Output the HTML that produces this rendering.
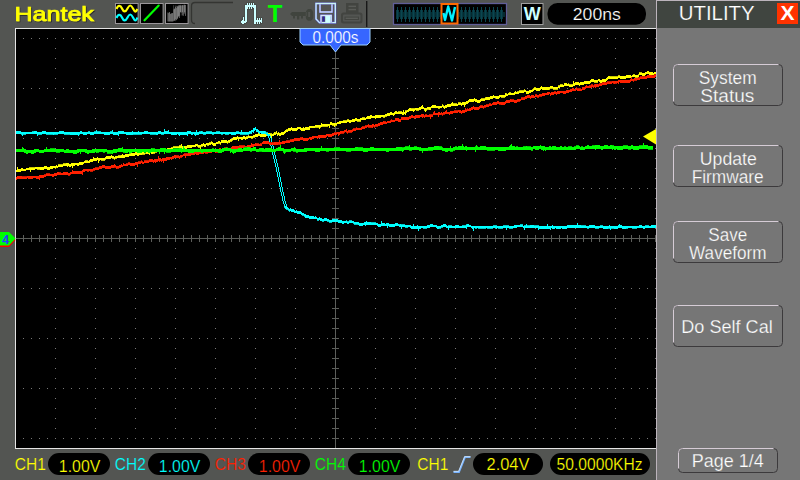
<!DOCTYPE html>
<html lang="en"><head><meta charset="utf-8"><title>Hantek UTILITY</title>
<style>html,body{margin:0;padding:0;background:#535552;width:800px;height:480px;overflow:hidden}svg{display:block;position:absolute;left:0;top:0}text{font-family:"Liberation Sans", sans-serif}</style>
</head><body>
<svg width="800" height="480" viewBox="0 0 800 480">
<defs>
<pattern id="hd" x="23" y="0" width="8" height="1" patternUnits="userSpaceOnUse"><rect width="1" height="1" fill="#787878"/></pattern>
<pattern id="vd" x="0" y="38" width="1" height="10" patternUnits="userSpaceOnUse"><rect width="1" height="1" fill="#787878"/></pattern>
<pattern id="ht" x="23" y="0" width="8" height="7" patternUnits="userSpaceOnUse"><rect width="1" height="7" fill="#5c5e5a"/></pattern>
<pattern id="vt" x="0" y="38" width="7" height="10" patternUnits="userSpaceOnUse"><rect width="7" height="1" fill="#5c5e5a"/></pattern>
<filter id="bl" x="-20%" y="-20%" width="140%" height="140%"><feGaussianBlur stdDeviation="0.45"/></filter>
<filter id="ds" x="-5%" y="-20%" width="110%" height="150%"><feDropShadow dx="1" dy="1" stdDeviation="0" flood-color="#2e2e2e" flood-opacity="1"/></filter>
</defs>
<rect width="800" height="480" fill="#535552"/>
<g shape-rendering="crispEdges">
<rect x="15" y="28" width="641" height="421" fill="#e4e4e4"/>
<rect x="16" y="29" width="640" height="419" fill="#000"/>
<rect x="23" y="38" width="633" height="1" fill="url(#hd)"/>
<rect x="23" y="88" width="633" height="1" fill="url(#hd)"/>
<rect x="23" y="138" width="633" height="1" fill="url(#hd)"/>
<rect x="23" y="188" width="633" height="1" fill="url(#hd)"/>
<rect x="23" y="288" width="633" height="1" fill="url(#hd)"/>
<rect x="23" y="338" width="633" height="1" fill="url(#hd)"/>
<rect x="23" y="388" width="633" height="1" fill="url(#hd)"/>
<rect x="23" y="438" width="633" height="1" fill="url(#hd)"/>
<rect x="55" y="38" width="1" height="401" fill="url(#vd)"/>
<rect x="95" y="38" width="1" height="401" fill="url(#vd)"/>
<rect x="135" y="38" width="1" height="401" fill="url(#vd)"/>
<rect x="175" y="38" width="1" height="401" fill="url(#vd)"/>
<rect x="215" y="38" width="1" height="401" fill="url(#vd)"/>
<rect x="255" y="38" width="1" height="401" fill="url(#vd)"/>
<rect x="295" y="38" width="1" height="401" fill="url(#vd)"/>
<rect x="375" y="38" width="1" height="401" fill="url(#vd)"/>
<rect x="415" y="38" width="1" height="401" fill="url(#vd)"/>
<rect x="455" y="38" width="1" height="401" fill="url(#vd)"/>
<rect x="495" y="38" width="1" height="401" fill="url(#vd)"/>
<rect x="535" y="38" width="1" height="401" fill="url(#vd)"/>
<rect x="575" y="38" width="1" height="401" fill="url(#vd)"/>
<rect x="615" y="38" width="1" height="401" fill="url(#vd)"/>
<rect x="655" y="38" width="1" height="401" fill="url(#vd)"/>
<rect x="16" y="238" width="640" height="1" fill="#5c5e5a"/>
<rect x="23" y="235" width="633" height="7" fill="url(#ht)"/>
<rect x="335" y="29" width="1" height="419" fill="#5c5e5a"/>
<rect x="332" y="38" width="7" height="401" fill="url(#vt)"/>
</g>
<g shape-rendering="crispEdges">
<path fill="#c6c600" d="M29 167h6v1h-6zM37 169h3v1h-3zM55 168h1v1h-1zM56 167h1v1h-1zM58 164h5v1h-5zM63 163h3v1h-3zM85 160h3v1h-3zM101 160h4v1h-4zM105 159h1v1h-1zM112 158h2v1h-2zM114 159h1v1h-1zM115 158h2v1h-2zM118 155h3v1h-3zM129 153h2v1h-2zM142 154h3v1h-3zM145 153h1v1h-1zM153 153h2v1h-2zM155 152h2v1h-2zM157 149h3v1h-3zM160 148h1v1h-1zM171 147h2v1h-2zM173 146h6v1h-6zM179 145h2v1h-2zM197 146h1v1h-1zM198 147h3v1h-3zM201 146h2v1h-2zM207 145h2v1h-2zM209 142h2v1h-2zM211 141h1v1h-1zM218 143h2v1h-2zM220 144h1v1h-1zM227 143h1v1h-1zM228 142h2v1h-2zM230 141h2v1h-2zM232 140h1v1h-1zM246 136h2v1h-2zM248 135h1v1h-1zM251 138h2v1h-2zM253 137h2v1h-2zM270 133h2v1h-2zM273 133h1v1h-1zM274 132h2v1h-2zM286 129h2v1h-2zM315 127h6v1h-6zM322 126h6v1h-6zM332 125h5v1h-5zM343 120h4v1h-4zM347 119h2v1h-2zM357 121h4v1h-4zM362 117h3v1h-3zM383 117h2v1h-2zM385 116h2v1h-2zM398 111h4v1h-4zM405 110h2v1h-2zM411 108h4v1h-4zM416 110h3v1h-3zM424 110h3v1h-3zM427 109h2v1h-2zM438 108h2v1h-2zM442 104h1v1h-1zM443 105h1v1h-1zM453 103h4v1h-4zM458 102h3v1h-3zM481 98h4v1h-4zM485 97h1v1h-1zM501 97h4v1h-4zM505 94h1v1h-1zM506 93h1v1h-1zM509 92h2v1h-2zM517 91h2v1h-2zM519 90h5v1h-5zM524 89h1v1h-1zM532 89h1v1h-1zM533 88h1v1h-1zM534 87h2v1h-2zM548 89h2v1h-2zM550 88h3v1h-3zM553 89h5v1h-5zM558 85h2v1h-2zM560 84h3v1h-3zM568 83h1v1h-1zM569 84h4v1h-4zM594 82h4v1h-4zM610 76h8v1h-8zM618 75h2v1h-2zM633 74h2v1h-2zM635 77h3v1h-3zM638 74h1v1h-1zM639 72h3v1h-3z"/><path fill="#ffff00" d="M16 170h1v2h-1zM17 169h4v3h-4zM21 168h2v3h-2zM23 169h3v2h-3zM26 168h9v2h-9zM35 167h5v2h-5zM40 167h4v3h-4zM44 166h3v3h-3zM47 167h3v3h-3zM50 166h3v3h-3zM53 166h3v2h-3zM56 165h1v2h-1zM57 166h1v2h-1zM58 165h5v2h-5zM63 164h3v2h-3zM66 163h3v3h-3zM69 164h2v3h-2zM71 163h3v3h-3zM74 163h3v2h-3zM77 163h2v3h-2zM79 162h4v3h-4zM83 162h1v2h-1zM84 161h5v2h-5zM89 160h1v3h-1zM90 159h3v3h-3zM93 159h1v2h-1zM94 158h3v3h-3zM97 157h1v3h-1zM98 158h2v3h-2zM100 158h5v2h-5zM105 157h1v2h-1zM106 156h5v3h-5zM111 155h1v3h-1zM112 156h2v2h-2zM114 157h1v2h-1zM115 156h6v2h-6zM121 155h4v3h-4zM125 154h4v3h-4zM129 154h2v2h-2zM131 153h4v3h-4zM135 152h2v3h-2zM137 153h2v3h-2zM139 152h3v3h-3zM142 152h3v2h-3zM145 151h1v2h-1zM146 151h3v3h-3zM149 150h2v3h-2zM151 151h2v3h-2zM153 151h2v2h-2zM155 150h5v2h-5zM160 149h2v2h-2zM162 149h2v3h-2zM164 150h2v2h-2zM166 149h1v3h-1zM167 148h4v3h-4zM171 148h2v2h-2zM173 147h6v2h-6zM179 146h2v2h-2zM181 146h6v3h-6zM187 145h5v3h-5zM192 145h3v2h-3zM195 144h3v2h-3zM198 145h3v2h-3zM201 144h3v2h-3zM204 144h2v3h-2zM206 143h5v2h-5zM211 142h1v2h-1zM212 142h1v3h-1zM213 143h3v3h-3zM216 142h2v2h-2zM218 141h2v2h-2zM220 142h1v2h-1zM221 140h6v3h-6zM227 141h1v2h-1zM228 140h2v2h-2zM230 139h2v2h-2zM232 138h1v2h-1zM233 137h4v3h-4zM237 136h1v3h-1zM238 137h3v2h-3zM241 137h2v3h-2zM243 136h2v3h-2zM245 137h1v3h-1zM246 137h2v2h-2zM248 136h5v2h-5zM253 135h2v2h-2zM255 134h3v3h-3zM258 133h1v3h-1zM259 134h1v2h-1zM260 134h6v3h-6zM266 133h4v3h-4zM270 134h4v2h-4zM274 133h2v2h-2zM276 131h1v3h-1zM277 133h1v3h-1zM278 132h1v3h-1zM279 133h2v3h-2zM281 132h3v3h-3zM284 131h1v3h-1zM285 131h1v2h-1zM286 130h2v2h-2zM288 128h3v3h-3zM291 127h1v3h-1zM292 128h5v3h-5zM297 127h1v3h-1zM298 127h2v2h-2zM300 127h1v3h-1zM301 128h4v3h-4zM305 127h5v3h-5zM310 126h5v2h-5zM315 125h7v2h-7zM322 124h8v2h-8zM330 122h2v3h-2zM332 123h5v2h-5zM337 122h2v2h-2zM339 121h2v3h-2zM341 121h6v2h-6zM347 120h2v2h-2zM349 120h2v3h-2zM351 120h1v2h-1zM352 119h3v3h-3zM355 118h2v3h-2zM357 119h4v2h-4zM361 118h5v2h-5zM366 117h1v2h-1zM367 116h4v3h-4zM371 115h1v3h-1zM372 116h3v2h-3zM375 115h6v3h-6zM381 115h4v2h-4zM385 114h2v2h-2zM387 113h3v3h-3zM390 112h2v3h-2zM392 113h2v2h-2zM394 112h1v3h-1zM395 111h2v3h-2zM397 112h5v2h-5zM402 112h2v3h-2zM404 112h1v2h-1zM405 111h2v2h-2zM407 110h1v2h-1zM408 109h1v3h-1zM409 108h2v3h-2zM411 109h4v2h-4zM415 108h4v2h-4zM419 107h2v3h-2zM421 106h2v3h-2zM423 107h1v2h-1zM424 108h3v2h-3zM427 107h2v2h-2zM429 107h2v3h-2zM431 106h1v2h-1zM432 105h4v3h-4zM436 106h6v2h-6zM442 105h1v2h-1zM443 106h1v2h-1zM444 106h1v3h-1zM445 105h2v3h-2zM447 104h4v3h-4zM451 103h2v3h-2zM453 104h5v2h-5zM458 103h3v2h-3zM461 103h1v3h-1zM462 102h4v3h-4zM466 101h2v3h-2zM468 100h1v3h-1zM469 99h5v3h-5zM474 98h1v3h-1zM475 99h2v3h-2zM477 100h3v3h-3zM480 99h1v3h-1zM481 99h4v2h-4zM485 98h1v2h-1zM486 97h4v3h-4zM490 96h3v3h-3zM493 95h1v3h-1zM494 96h2v2h-2zM496 96h3v3h-3zM499 95h1v3h-1zM500 95h6v2h-6zM506 94h2v2h-2zM508 93h6v2h-6zM514 92h1v3h-1zM515 91h1v3h-1zM516 92h3v2h-3zM519 91h5v2h-5zM524 90h2v2h-2zM526 91h3v3h-3zM529 90h2v3h-2zM531 90h2v2h-2zM533 89h1v2h-1zM534 88h2v2h-2zM536 88h4v3h-4zM540 87h1v3h-1zM541 86h1v3h-1zM542 87h6v3h-6zM548 87h2v2h-2zM550 86h3v2h-3zM553 87h5v2h-5zM558 86h2v2h-2zM560 85h4v2h-4zM564 83h3v3h-3zM567 84h2v2h-2zM569 85h4v2h-4zM573 83h2v3h-2zM575 82h4v3h-4zM579 83h1v3h-1zM580 82h4v3h-4zM584 81h6v3h-6zM590 80h1v3h-1zM591 79h3v3h-3zM594 80h4v2h-4zM598 79h1v2h-1zM599 79h1v3h-1zM600 80h2v3h-2zM602 79h4v3h-4zM606 78h1v3h-1zM607 77h1v3h-1zM608 76h2v3h-2zM610 77h8v2h-8zM618 76h2v2h-2zM620 76h6v3h-6zM626 75h5v3h-5zM631 76h1v2h-1zM632 75h7v2h-7zM639 73h3v2h-3zM642 73h3v3h-3zM645 72h1v3h-1zM646 72h1v2h-1zM647 71h2v3h-2zM649 72h4v3h-4zM653 73h1v3h-1zM654 72h2v3h-2z"/><path fill="#ffff00" d="M17 167h1v2h-1zM30 170h1v2h-1zM67 166h1v1h-1zM72 166h1v2h-1zM74 165h1v1h-1zM93 157h1v2h-1zM98 161h1v2h-1zM122 154h1v1h-1zM129 153h1v1h-1zM149 153h1v2h-1zM161 151h1v1h-1zM167 151h1v1h-1zM181 144h1v2h-1zM195 146h1v1h-1zM200 147h1v2h-1zM203 143h1v1h-1zM229 142h1v1h-1zM238 139h1v2h-1zM271 136h1v2h-1zM274 132h1v1h-1zM285 130h1v1h-1zM303 127h1v1h-1zM309 126h1v1h-1zM319 127h1v2h-1zM321 123h1v2h-1zM329 126h1v2h-1zM334 125h1v2h-1zM360 118h1v1h-1zM370 115h1v1h-1zM375 118h1v1h-1zM393 115h1v1h-1zM403 110h1v2h-1zM405 113h1v2h-1zM413 111h1v1h-1zM422 105h1v1h-1zM425 110h1v2h-1zM452 102h1v1h-1zM464 105h1v2h-1zM505 93h1v2h-1zM548 89h1v1h-1zM573 81h1v2h-1z"/>
<path fill="#00c6c6" d="M21 134h5v1h-5zM32 131h2v1h-2zM37 134h5v1h-5zM46 134h12v1h-12zM64 134h6v1h-6zM78 134h2v1h-2zM88 131h2v1h-2zM94 131h2v1h-2zM97 131h4v1h-4zM110 131h2v1h-2zM133 134h9v1h-9zM150 134h6v1h-6zM161 134h3v1h-3zM199 131h4v1h-4zM203 134h3v1h-3zM206 131h6v1h-6zM212 134h2v1h-2zM216 131h4v1h-4zM221 134h2v1h-2zM225 134h4v1h-4zM236 131h3v1h-3zM240 134h9v1h-9zM249 133h2v1h-2zM251 132h1v1h-1zM265 131h1v1h-1zM266 132h2v1h-2z"/><path fill="#00ffff" d="M16 131h5v3h-5zM21 132h13v2h-13zM34 131h3v3h-3zM37 132h5v2h-5zM42 131h4v3h-4zM46 132h13v2h-13zM59 131h5v3h-5zM64 132h6v2h-6zM70 132h8v3h-8zM78 132h2v2h-2zM80 131h2v3h-2zM82 132h1v2h-1zM83 132h3v3h-3zM86 132h4v2h-4zM90 132h4v3h-4zM94 132h10v2h-10zM104 132h6v3h-6zM110 132h3v2h-3zM113 132h5v3h-5zM118 131h6v3h-6zM124 132h3v2h-3zM127 132h6v3h-6zM133 132h11v2h-11zM144 131h4v3h-4zM148 132h8v2h-8zM156 132h2v3h-2zM158 131h3v3h-3zM161 132h3v2h-3zM164 131h5v3h-5zM169 132h2v2h-2zM171 132h6v3h-6zM177 132h1v2h-1zM178 132h9v3h-9zM187 131h4v3h-4zM191 132h2v3h-2zM193 132h1v2h-1zM194 132h5v3h-5zM199 132h32v2h-32zM231 132h5v3h-5zM236 132h13v2h-13zM249 131h2v2h-2zM251 130h2v2h-2zM253 128h2v3h-2zM255 127h1v3h-1zM256 129h2v3h-2zM258 130h1v3h-1zM259 131h1v3h-1zM260 131h1v2h-1zM261 131h4v3h-4zM265 132h1v2h-1zM266 133h2v2h-2zM268 134h1v2h-1z"/><path fill="#00ffff" d="M22 134h1v2h-1zM37 134h1v2h-1zM53 134h1v1h-1zM78 134h1v2h-1zM86 134h1v1h-1zM96 130h1v2h-1zM112 130h1v2h-1zM118 134h1v2h-1zM126 134h1v1h-1zM132 131h1v1h-1zM138 131h1v1h-1zM164 129h1v2h-1zM168 130h1v1h-1zM179 135h1v1h-1zM187 134h1v2h-1zM195 135h1v1h-1zM196 130h1v2h-1zM201 131h1v1h-1zM241 130h1v2h-1zM249 133h1v1h-1zM251 132h1v2h-1zM253 131h1v2h-1z"/>
<path fill="#00c6c6" d="M284 207h1v1h-1zM285 208h1v1h-1zM286 209h2v1h-2zM288 210h1v1h-1zM289 211h1v1h-1zM302 215h2v1h-2zM304 216h2v1h-2zM317 220h2v1h-2zM322 221h2v1h-2zM327 221h2v1h-2zM329 222h3v1h-3zM346 220h1v1h-1zM347 221h2v1h-2zM349 220h3v1h-3zM353 223h1v1h-1zM354 224h4v1h-4zM371 222h5v1h-5zM399 224h6v1h-6zM405 227h3v1h-3zM423 228h4v1h-4zM439 228h2v1h-2zM441 227h2v1h-2zM448 225h4v1h-4zM462 225h4v1h-4zM466 224h1v1h-1zM475 228h2v1h-2zM478 228h8v1h-8zM487 228h6v1h-6zM493 225h4v1h-4zM498 228h5v1h-5zM503 225h6v1h-6zM509 228h4v1h-4zM520 224h3v1h-3zM524 225h6v1h-6zM534 225h5v1h-5zM581 225h5v1h-5zM587 228h2v1h-2zM595 228h4v1h-4zM600 225h3v1h-3zM608 228h6v1h-6zM626 228h2v1h-2zM632 228h5v1h-5zM645 225h4v1h-4z"/><path fill="#00ffff" d="M284 205h1v2h-1zM285 206h1v2h-1zM286 207h2v2h-2zM288 208h1v2h-1zM289 209h1v2h-1zM290 208h1v3h-1zM291 209h3v3h-3zM294 210h1v3h-1zM295 211h1v2h-1zM296 210h1v3h-1zM297 211h4v3h-4zM301 212h1v3h-1zM302 213h2v2h-2zM304 214h2v2h-2zM306 215h3v3h-3zM309 216h5v3h-5zM314 217h3v2h-3zM317 218h2v2h-2zM319 217h1v3h-1zM320 218h2v3h-2zM322 219h2v2h-2zM324 218h3v3h-3zM327 219h2v2h-2zM329 220h3v2h-3zM332 219h6v3h-6zM338 220h4v3h-4zM342 221h2v3h-2zM344 221h3v2h-3zM347 222h2v2h-2zM349 221h5v2h-5zM354 222h4v2h-4zM358 222h1v3h-1zM359 223h4v3h-4zM363 223h1v2h-1zM364 222h7v3h-7zM371 223h6v2h-6zM377 223h1v3h-1zM378 224h3v3h-3zM381 223h4v3h-4zM385 224h1v2h-1zM386 223h3v3h-3zM389 224h6v3h-6zM395 223h3v3h-3zM398 224h1v2h-1zM399 225h11v2h-11zM410 225h1v3h-1zM411 226h10v3h-10zM421 226h6v2h-6zM427 225h3v3h-3zM430 224h3v3h-3zM433 225h3v2h-3zM436 225h1v3h-1zM437 226h2v3h-2zM439 226h2v2h-2zM441 225h2v2h-2zM443 224h3v3h-3zM446 225h1v3h-1zM447 226h8v2h-8zM455 225h4v3h-4zM459 226h7v2h-7zM466 225h1v2h-1zM467 224h2v3h-2zM469 225h2v2h-2zM471 226h1v2h-1zM472 226h2v3h-2zM474 226h41v2h-41zM515 225h2v3h-2zM517 225h6v2h-6zM523 226h7v2h-7zM530 225h4v3h-4zM534 226h5v2h-5zM539 226h11v3h-11zM550 226h2v2h-2zM552 226h3v3h-3zM555 226h1v2h-1zM556 226h5v3h-5zM561 226h1v2h-1zM562 226h5v3h-5zM567 225h14v3h-14zM581 226h8v2h-8zM589 225h6v3h-6zM595 226h8v2h-8zM603 226h5v3h-5zM608 226h6v2h-6zM614 226h4v3h-4zM618 225h4v3h-4zM622 226h4v3h-4zM626 226h13v2h-13zM639 225h3v3h-3zM642 226h1v2h-1zM643 226h2v3h-2zM645 226h6v2h-6zM651 225h4v3h-4zM655 226h1v2h-1z"/><path fill="#00ffff" d="M285 208h1v1h-1zM305 216h1v2h-1zM315 216h1v1h-1zM365 225h1v1h-1zM366 221h1v1h-1zM381 221h1v2h-1zM387 226h1v2h-1zM400 224h1v1h-1zM401 227h1v2h-1zM413 224h1v2h-1zM417 225h1v1h-1zM418 229h1v2h-1zM448 228h1v2h-1zM466 227h1v2h-1zM473 229h1v2h-1zM496 228h1v1h-1zM506 228h1v2h-1zM514 225h1v1h-1zM524 228h1v2h-1zM526 224h1v2h-1zM538 228h1v2h-1zM547 224h1v2h-1zM550 228h1v2h-1zM552 225h1v1h-1zM577 223h1v2h-1zM609 225h1v1h-1zM610 228h1v2h-1zM619 224h1v1h-1zM655 225h1v1h-1z"/>
</g>
<path shape-rendering="crispEdges" fill="#00ffff" d="M267 134h1v1h-1zM269 134h1v1h-1zM267 135h1v1h-1zM269 135h1v1h-1zM268 136h1v1h-1zM270 136h1v1h-1zM268 137h1v1h-1zM270 137h1v1h-1zM269 138h1v1h-1zM271 138h1v1h-1zM269 139h1v1h-1zM271 139h1v1h-1zM269 140h1v1h-1zM271 140h1v1h-1zM269 141h1v1h-1zM271 141h1v1h-1zM270 142h1v1h-1zM272 142h1v1h-1zM270 143h1v1h-1zM272 143h1v1h-1zM270 144h1v1h-1zM272 144h1v1h-1zM270 145h1v1h-1zM272 145h1v1h-1zM271 146h1v1h-1zM273 146h1v1h-1zM271 147h1v1h-1zM273 147h1v1h-1zM271 148h1v1h-1zM273 148h1v1h-1zM271 149h1v1h-1zM273 149h1v1h-1zM272 150h1v1h-1zM274 150h1v1h-1zM272 151h1v1h-1zM274 151h1v1h-1zM272 152h1v1h-1zM274 152h1v1h-1zM272 153h1v1h-1zM274 153h1v1h-1zM272 154h1v1h-1zM274 154h1v1h-1zM273 155h1v1h-1zM275 155h1v1h-1zM273 156h1v1h-1zM275 156h1v1h-1zM273 157h1v1h-1zM275 157h1v1h-1zM273 158h1v1h-1zM275 158h1v1h-1zM274 159h1v1h-1zM276 159h1v1h-1zM274 160h1v1h-1zM276 160h1v1h-1zM274 161h1v1h-1zM276 161h1v1h-1zM274 162h1v1h-1zM276 162h1v1h-1zM275 163h1v1h-1zM277 163h1v1h-1zM275 164h1v1h-1zM277 164h1v1h-1zM275 165h1v1h-1zM277 165h1v1h-1zM275 166h1v1h-1zM277 166h1v1h-1zM276 167h1v1h-1zM278 167h1v1h-1zM276 168h1v1h-1zM278 168h1v1h-1zM276 169h1v1h-1zM278 169h1v1h-1zM276 170h1v1h-1zM278 170h1v1h-1zM276 171h1v1h-1zM278 171h1v1h-1zM277 172h1v1h-1zM279 172h1v1h-1zM277 173h1v1h-1zM279 173h1v1h-1zM277 174h1v1h-1zM279 174h1v1h-1zM277 175h1v1h-1zM279 175h1v1h-1zM277 176h1v1h-1zM279 176h1v1h-1zM278 177h1v1h-1zM280 177h1v1h-1zM278 178h1v1h-1zM280 178h1v1h-1zM278 179h1v1h-1zM280 179h1v1h-1zM278 180h1v1h-1zM280 180h1v1h-1zM278 181h1v1h-1zM280 181h1v1h-1zM279 182h1v1h-1zM281 182h1v1h-1zM279 183h1v1h-1zM281 183h1v1h-1zM279 184h1v1h-1zM281 184h1v1h-1zM279 185h1v1h-1zM281 185h1v1h-1zM279 186h1v1h-1zM281 186h1v1h-1zM280 187h1v1h-1zM282 187h1v1h-1zM280 188h1v1h-1zM282 188h1v1h-1zM280 189h1v1h-1zM282 189h1v1h-1zM280 190h1v1h-1zM282 190h1v1h-1zM280 191h1v1h-1zM282 191h1v1h-1zM281 192h1v1h-1zM283 192h1v1h-1zM281 193h1v1h-1zM283 193h1v1h-1zM281 194h1v1h-1zM283 194h1v1h-1zM281 195h1v1h-1zM283 195h1v1h-1zM282 196h1v1h-1zM284 196h1v1h-1zM282 197h1v1h-1zM284 197h1v1h-1zM282 198h1v1h-1zM284 198h1v1h-1zM282 199h1v1h-1zM284 199h1v1h-1zM282 200h1v1h-1zM284 200h1v1h-1zM283 201h1v1h-1zM285 201h1v1h-1zM283 202h1v1h-1zM285 202h1v1h-1zM283 203h1v1h-1zM285 203h1v1h-1zM284 204h1v1h-1zM286 204h1v1h-1zM284 205h1v1h-1zM286 205h1v1h-1zM284 206h1v1h-1zM286 206h1v1h-1z"/>
<g shape-rendering="crispEdges">
<path fill="#c61800" d="M22 176h5v1h-5zM44 174h2v1h-2zM46 173h4v1h-4zM59 172h2v1h-2zM68 175h2v1h-2zM70 174h1v1h-1zM87 171h2v1h-2zM90 171h3v1h-3zM93 170h2v1h-2zM95 167h4v1h-4zM114 167h2v1h-2zM116 168h3v1h-3zM126 163h2v1h-2zM128 162h2v1h-2zM138 161h3v1h-3zM141 160h1v1h-1zM142 161h1v1h-1zM144 160h5v1h-5zM176 155h3v1h-3zM179 158h1v1h-1zM180 157h2v1h-2zM184 153h4v1h-4zM200 151h4v1h-4zM204 150h1v1h-1zM205 153h3v1h-3zM215 152h3v1h-3zM218 151h1v1h-1zM224 147h2v1h-2zM226 148h1v1h-1zM227 147h1v1h-1zM239 145h6v1h-6zM255 143h4v1h-4zM260 143h2v1h-2zM269 142h5v1h-5zM278 144h3v1h-3zM286 140h4v1h-4zM290 139h2v1h-2zM300 137h2v1h-2zM334 132h3v1h-3zM341 133h3v1h-3zM344 132h1v1h-1zM346 132h1v1h-1zM347 133h1v1h-1zM348 132h4v1h-4zM352 129h1v1h-1zM353 128h3v1h-3zM356 127h1v1h-1zM362 126h3v1h-3zM365 125h2v1h-2zM368 127h4v1h-4zM372 126h2v1h-2zM374 127h1v1h-1zM375 126h3v1h-3zM384 121h2v1h-2zM390 120h1v1h-1zM391 119h1v1h-1zM424 115h1v1h-1zM425 114h2v1h-2zM429 114h4v1h-4zM433 112h1v1h-1zM441 114h1v1h-1zM442 115h1v1h-1zM443 114h2v1h-2zM454 110h4v1h-4zM466 109h1v1h-1zM467 108h1v1h-1zM480 105h3v1h-3zM483 108h1v1h-1zM484 107h2v1h-2zM486 104h3v1h-3zM489 103h2v1h-2zM499 104h2v1h-2zM511 99h3v1h-3zM518 101h2v1h-2zM521 97h3v1h-3zM535 94h2v1h-2zM537 97h2v1h-2zM539 96h3v1h-3zM554 91h2v1h-2zM576 87h1v1h-1zM577 88h4v1h-4zM589 85h2v1h-2zM591 84h2v1h-2zM593 85h1v1h-1zM594 84h1v1h-1zM598 84h1v1h-1zM599 83h3v1h-3zM602 82h5v1h-5zM607 81h5v1h-5zM613 83h4v1h-4zM633 81h1v1h-1zM634 80h3v1h-3zM638 77h2v1h-2zM640 76h6v1h-6zM652 75h2v1h-2zM654 74h2v1h-2z"/><path fill="#ff2000" d="M16 177h1v3h-1zM17 176h5v3h-5zM22 177h5v2h-5zM27 176h1v2h-1zM28 176h5v3h-5zM33 176h3v2h-3zM36 176h3v3h-3zM39 175h5v3h-5zM44 175h2v2h-2zM46 174h6v2h-6zM52 174h2v3h-2zM54 173h3v3h-3zM57 172h2v3h-2zM59 173h4v2h-4zM63 172h5v3h-5zM68 173h2v2h-2zM70 172h3v2h-3zM73 171h9v3h-9zM82 170h1v3h-1zM83 169h2v3h-2zM85 169h8v2h-8zM93 168h6v2h-6zM99 166h3v3h-3zM102 165h3v3h-3zM105 166h6v3h-6zM111 165h3v3h-3zM114 165h2v2h-2zM116 166h3v2h-3zM119 165h2v3h-2zM121 164h1v3h-1zM122 165h1v2h-1zM123 164h5v2h-5zM128 163h2v2h-2zM130 163h5v3h-5zM135 162h3v3h-3zM138 162h3v2h-3zM141 161h1v2h-1zM142 162h2v2h-2zM144 161h5v2h-5zM149 159h3v3h-3zM152 160h1v2h-1zM153 160h1v3h-1zM154 159h4v3h-4zM158 158h3v3h-3zM161 159h1v3h-1zM162 158h5v3h-5zM167 157h3v3h-3zM170 157h1v2h-1zM171 157h1v3h-1zM172 156h2v3h-2zM174 155h2v3h-2zM176 156h4v2h-4zM180 155h3v2h-3zM183 154h5v2h-5zM188 153h3v3h-3zM191 152h4v3h-4zM195 151h1v3h-1zM196 152h3v3h-3zM199 151h1v3h-1zM200 152h4v2h-4zM204 151h4v2h-4zM208 150h4v3h-4zM212 150h6v2h-6zM218 149h1v2h-1zM219 148h2v3h-2zM221 149h3v2h-3zM224 148h2v2h-2zM226 149h1v2h-1zM227 148h2v2h-2zM229 148h2v3h-2zM231 147h1v3h-1zM232 146h7v3h-7zM239 146h6v2h-6zM245 146h2v3h-2zM247 145h4v3h-4zM251 144h3v3h-3zM254 144h8v2h-8zM262 142h1v2h-1zM263 141h6v3h-6zM269 143h5v2h-5zM274 142h4v3h-4zM278 142h4v2h-4zM282 141h3v3h-3zM285 141h5v2h-5zM290 140h2v2h-2zM292 139h2v3h-2zM294 138h6v3h-6zM300 138h2v2h-2zM302 137h1v3h-1zM303 138h5v3h-5zM308 138h1v2h-1zM309 137h1v2h-1zM310 137h2v3h-2zM312 136h2v3h-2zM314 136h3v2h-3zM317 136h1v3h-1zM318 135h8v3h-8zM326 134h1v3h-1zM327 134h1v2h-1zM328 134h4v3h-4zM332 133h2v3h-2zM334 133h3v2h-3zM337 132h2v2h-2zM339 132h1v3h-1zM340 131h1v3h-1zM341 131h3v2h-3zM344 130h3v2h-3zM347 131h1v2h-1zM348 130h5v2h-5zM353 129h3v2h-3zM356 128h5v2h-5zM361 127h4v2h-4zM365 126h2v2h-2zM367 125h5v2h-5zM372 124h2v2h-2zM374 125h1v2h-1zM375 124h3v2h-3zM378 123h2v3h-2zM380 122h3v3h-3zM383 121h1v3h-1zM384 122h3v2h-3zM387 121h4v2h-4zM391 120h4v2h-4zM395 118h4v3h-4zM399 119h2v3h-2zM401 117h8v3h-8zM409 116h2v3h-2zM411 115h2v3h-2zM413 116h1v2h-1zM414 116h1v3h-1zM415 115h5v3h-5zM420 115h1v2h-1zM421 114h3v3h-3zM424 116h1v2h-1zM425 115h8v2h-8zM433 113h5v2h-5zM438 112h2v3h-2zM440 113h1v2h-1zM441 112h1v2h-1zM442 113h1v2h-1zM443 112h6v2h-6zM449 112h1v3h-1zM450 111h3v3h-3zM453 111h5v2h-5zM458 110h1v2h-1zM459 110h2v3h-2zM461 111h1v3h-1zM462 110h3v3h-3zM465 110h2v2h-2zM467 109h2v2h-2zM469 108h2v3h-2zM471 107h2v3h-2zM473 106h1v3h-1zM474 107h5v3h-5zM479 106h1v3h-1zM480 106h4v2h-4zM484 105h5v2h-5zM489 104h3v2h-3zM492 103h1v2h-1zM493 102h4v3h-4zM497 101h2v3h-2zM499 102h2v2h-2zM501 102h4v3h-4zM505 101h1v3h-1zM506 100h4v3h-4zM510 99h1v3h-1zM511 100h3v2h-3zM514 100h3v3h-3zM517 99h1v3h-1zM518 99h3v2h-3zM521 98h3v2h-3zM524 97h1v3h-1zM525 96h2v3h-2zM527 95h3v3h-3zM530 96h1v3h-1zM531 95h3v3h-3zM534 96h1v2h-1zM535 95h4v2h-4zM539 94h3v2h-3zM542 93h3v3h-3zM545 93h2v2h-2zM547 92h2v3h-2zM549 92h1v2h-1zM550 93h1v3h-1zM551 92h3v3h-3zM554 92h2v2h-2zM556 92h1v3h-1zM557 91h3v3h-3zM560 91h3v2h-3zM563 91h3v3h-3zM566 90h3v3h-3zM569 90h1v2h-1zM570 89h2v3h-2zM572 88h2v3h-2zM574 89h2v2h-2zM576 88h1v2h-1zM577 89h5v2h-5zM582 87h3v3h-3zM585 86h1v3h-1zM586 85h1v3h-1zM587 86h4v2h-4zM591 85h2v2h-2zM593 86h1v2h-1zM594 85h1v2h-1zM595 84h3v3h-3zM598 85h1v2h-1zM599 84h3v2h-3zM602 83h5v2h-5zM607 82h5v2h-5zM612 81h6v2h-6zM618 80h2v2h-2zM620 80h10v3h-10zM630 79h1v3h-1zM631 79h3v2h-3zM634 78h6v2h-6zM640 77h6v2h-6zM646 76h1v3h-1zM647 75h5v3h-5zM652 76h2v2h-2zM654 75h2v2h-2z"/><path fill="#ff2000" d="M39 178h1v2h-1zM72 170h1v2h-1zM82 173h1v2h-1zM114 164h1v1h-1zM116 168h1v1h-1zM123 163h1v1h-1zM137 165h1v2h-1zM152 159h1v1h-1zM155 162h1v1h-1zM158 156h1v2h-1zM159 161h1v1h-1zM163 161h1v2h-1zM166 157h1v1h-1zM179 158h1v1h-1zM185 156h1v2h-1zM215 152h1v1h-1zM227 150h1v1h-1zM251 143h1v1h-1zM255 143h1v1h-1zM279 140h1v2h-1zM338 134h1v2h-1zM346 129h1v1h-1zM361 129h1v1h-1zM368 124h1v1h-1zM372 126h1v2h-1zM398 121h1v1h-1zM422 117h1v1h-1zM430 117h1v2h-1zM434 111h1v2h-1zM438 115h1v2h-1zM445 111h1v1h-1zM446 110h1v2h-1zM465 108h1v2h-1zM591 87h1v1h-1zM595 87h1v1h-1zM604 82h1v1h-1zM614 83h1v1h-1zM618 82h1v2h-1zM631 77h1v2h-1zM654 77h1v1h-1z"/>
<path fill="#00c600" d="M50 148h5v1h-5zM56 152h4v1h-4zM97 152h2v1h-2zM103 152h2v1h-2zM107 153h5v1h-5zM123 152h2v1h-2zM144 152h2v1h-2zM152 148h3v1h-3zM166 152h5v1h-5zM173 148h6v1h-6zM212 148h2v1h-2zM244 147h3v1h-3zM250 151h2v1h-2zM259 151h3v1h-3zM283 152h3v1h-3zM293 151h3v1h-3zM296 152h2v1h-2zM326 151h3v1h-3zM334 147h6v1h-6zM346 151h5v1h-5zM358 147h5v1h-5zM402 147h2v1h-2zM405 146h4v1h-4zM409 150h3v1h-3zM414 146h3v1h-3zM419 147h2v1h-2zM428 150h5v1h-5zM439 146h3v1h-3zM442 147h1v1h-1zM450 151h3v1h-3zM453 150h2v1h-2zM455 146h2v1h-2zM475 146h3v1h-3zM487 150h8v1h-8zM516 146h2v1h-2zM523 146h8v1h-8zM531 150h2v1h-2zM564 146h2v1h-2zM568 146h4v1h-4zM574 146h2v1h-2zM576 145h3v1h-3zM581 146h2v1h-2zM592 145h3v1h-3zM612 145h2v1h-2zM623 145h5v1h-5zM628 149h3v1h-3zM639 145h4v1h-4zM648 149h5v1h-5z"/><path fill="#00ff00" d="M16 149h6v3h-6zM22 148h2v4h-2zM24 149h2v4h-2zM26 150h2v4h-2zM28 150h3v3h-3zM31 150h3v4h-3zM34 149h2v4h-2zM36 149h3v3h-3zM39 150h5v3h-5zM44 149h20v3h-20zM64 150h2v3h-2zM66 149h3v4h-3zM69 150h4v3h-4zM73 150h4v4h-4zM77 149h2v4h-2zM79 149h6v3h-6zM85 149h2v4h-2zM87 150h2v4h-2zM89 150h3v3h-3zM92 149h3v4h-3zM95 149h12v3h-12zM107 150h5v3h-5zM112 150h1v4h-1zM113 149h4v4h-4zM117 149h1v3h-1zM118 148h4v4h-4zM122 149h3v3h-3zM125 149h3v4h-3zM128 149h1v3h-1zM129 149h3v4h-3zM132 149h5v3h-5zM137 149h5v4h-5zM142 149h6v3h-6zM148 149h3v4h-3zM151 149h9v3h-9zM160 148h6v4h-6zM166 149h13v3h-13zM179 148h3v4h-3zM182 149h1v3h-1zM183 148h2v4h-2zM185 149h3v3h-3zM188 149h6v4h-6zM194 149h7v3h-7zM201 149h2v4h-2zM203 149h15v3h-15zM218 149h4v4h-4zM222 148h2v4h-2zM224 148h7v3h-7zM231 149h1v3h-1zM232 149h4v4h-4zM236 149h2v3h-2zM238 148h4v4h-4zM242 149h1v3h-1zM243 148h4v3h-4zM247 147h3v4h-3zM250 148h3v3h-3zM253 147h3v4h-3zM256 149h3v3h-3zM259 148h3v3h-3zM262 148h2v4h-2zM264 149h2v3h-2zM266 148h5v4h-5zM271 149h5v3h-5zM276 148h2v3h-2zM278 147h3v4h-3zM281 148h2v3h-2zM283 149h8v3h-8zM291 148h5v3h-5zM296 149h8v3h-8zM304 148h3v4h-3zM307 148h8v3h-8zM315 148h5v4h-5zM320 148h35v3h-35zM355 147h3v4h-3zM358 148h5v3h-5zM363 148h5v4h-5zM368 148h2v3h-2zM370 147h4v4h-4zM374 148h12v3h-12zM386 148h3v4h-3zM389 148h7v3h-7zM396 147h6v4h-6zM402 148h2v3h-2zM404 147h15v3h-15zM419 148h9v3h-9zM428 147h6v3h-6zM434 146h5v4h-5zM439 147h3v3h-3zM442 148h3v3h-3zM445 148h3v4h-3zM448 148h5v3h-5zM453 147h5v3h-5zM458 146h6v4h-6zM464 147h1v3h-1zM465 146h2v4h-2zM467 147h13v3h-13zM480 146h6v4h-6zM486 147h12v3h-12zM498 147h8v4h-8zM506 147h3v3h-3zM509 146h6v4h-6zM515 147h18v3h-18zM533 146h2v3h-2zM535 146h4v4h-4zM539 146h1v3h-1zM540 145h1v4h-1zM541 146h4v4h-4zM545 147h4v3h-4zM549 146h2v4h-2zM551 147h1v3h-1zM552 146h4v4h-4zM556 147h4v3h-4zM560 146h2v4h-2zM562 147h14v3h-14zM576 146h4v3h-4zM580 147h5v3h-5zM585 146h2v3h-2zM587 145h2v4h-2zM589 146h6v3h-6zM595 145h5v4h-5zM600 146h1v3h-1zM601 146h2v4h-2zM603 146h1v3h-1zM604 145h4v4h-4zM608 146h2v3h-2zM610 145h2v4h-2zM612 146h2v3h-2zM614 146h2v4h-2zM616 146h1v3h-1zM617 146h6v4h-6zM623 146h8v3h-8zM631 145h2v4h-2zM633 146h6v4h-6zM639 146h4v3h-4zM643 145h5v4h-5zM648 146h5v3h-5z"/><path fill="#00ff00" d="M22 147h1v1h-1zM46 147h1v2h-1zM80 152h1v2h-1zM96 152h1v1h-1zM122 147h1v2h-1zM129 153h1v1h-1zM151 148h1v1h-1zM159 152h1v2h-1zM164 152h1v2h-1zM181 152h1v1h-1zM183 146h1v2h-1zM226 147h1v1h-1zM230 151h1v2h-1zM233 153h1v1h-1zM265 148h1v1h-1zM271 148h1v1h-1zM280 145h1v2h-1zM283 148h1v1h-1zM284 152h1v2h-1zM294 147h1v1h-1zM321 146h1v2h-1zM402 151h1v1h-1zM409 145h1v2h-1zM420 147h1v1h-1zM422 151h1v2h-1zM450 146h1v2h-1zM462 144h1v2h-1zM466 150h1v1h-1zM475 150h1v2h-1zM476 145h1v2h-1zM510 145h1v1h-1zM511 144h1v2h-1zM526 146h1v1h-1zM543 150h1v1h-1zM545 150h1v1h-1zM595 149h1v1h-1zM612 149h1v1h-1zM643 143h1v2h-1z"/>
</g>
<path d="M643 136.5 L656 129 L656 144.5 Z" fill="#ffff00"/>
<path d="M300 28.5 H370 V42 L367 45 H341 L335.5 52 L330 45 H303 L300 42 Z" fill="#3666ff" stroke="#9cd0ff" stroke-width="1"/>
<text x="335.5" y="43" font-size="16.5" fill="#fff" stroke="#3666ff" stroke-width="0.2" text-anchor="middle" textLength="46" lengthAdjust="spacingAndGlyphs">0.000s</text>
<rect x="0" y="28" width="15" height="421" fill="#535552"/>
<path d="M0 233.5 H9 L15.5 240 L9 247 H0 Z" fill="#ff0000"/>
<path d="M0 232 H9 L15.5 238.5 L9 245.5 H0 Z" fill="#00ff00"/>
<text x="5.5" y="244" font-size="13" font-weight="bold" fill="#2a3cff" text-anchor="middle">4</text>
<text filter="url(#ds)" x="14.4" y="21.2" font-size="19.8" fill="#ffff00" stroke="#ffff00" stroke-width="0.7" textLength="79.5" lengthAdjust="spacingAndGlyphs">Hantek</text>
<rect x="115.5" y="3.5" width="22.6" height="20" fill="#000" stroke="#9a969a" stroke-width="1"/>
<rect x="140.5" y="3.5" width="22.6" height="20" fill="#000" stroke="#9a969a" stroke-width="1"/>
<rect x="165.5" y="3.5" width="22.6" height="20" fill="#000" stroke="#9a969a" stroke-width="1"/>
<path d="M116.5 9 C118 5,120.5 5,122 8.5 S125.5 12.5,127.5 8.5 S131 4.5,133 8.5 S136 12.5,137.3 9" fill="none" stroke="#ffff00" stroke-width="2.2"/>
<path d="M116.5 18 C118 14,120.5 14,122 17.5 S125.5 21.5,127.5 17.5 S131 13.5,133 17.5 S136 21.5,137.3 17.5" fill="none" stroke="#00ffff" stroke-width="2.2"/>
<path d="M144.5 20.3 L158.7 5.6" stroke="#00ff00" stroke-width="2.2" stroke-linecap="round"/>
<g filter="url(#bl)" fill="#b4b4b4"><rect x="167.5" y="12.5" width="0.6" height="9.0" opacity="0.65"/><rect x="168.0" y="12.7" width="0.6" height="8.8" opacity="0.68"/><rect x="168.5" y="13.3" width="0.6" height="8.2" opacity="0.39"/><rect x="169.0" y="12.0" width="0.6" height="9.5" opacity="0.81"/><rect x="169.5" y="12.5" width="0.6" height="9.0" opacity="0.48"/><rect x="170.0" y="14.0" width="0.6" height="7.5" opacity="0.61"/><rect x="170.5" y="13.7" width="0.6" height="7.8" opacity="0.61"/><rect x="171.0" y="13.3" width="0.6" height="8.2" opacity="0.43"/><rect x="171.5" y="13.3" width="0.6" height="8.2" opacity="0.83"/><rect x="172.0" y="13.0" width="0.6" height="8.5" opacity="0.76"/><rect x="172.5" y="13.3" width="0.6" height="8.2" opacity="0.39"/><rect x="173.0" y="9.4" width="0.6" height="12.0" opacity="0.52"/><rect x="173.5" y="5.2" width="0.6" height="15.7" opacity="0.61"/><rect x="174.0" y="8.5" width="0.6" height="11.9" opacity="0.74"/><rect x="174.5" y="9.1" width="0.6" height="11.7" opacity="0.79"/><rect x="175.0" y="6.8" width="0.6" height="12.6" opacity="0.83"/><rect x="175.5" y="5.4" width="0.6" height="15.8" opacity="0.47"/><rect x="176.0" y="8.1" width="0.6" height="12.0" opacity="0.69"/><rect x="176.5" y="5.8" width="0.6" height="13.8" opacity="0.56"/><rect x="177.0" y="5.8" width="0.6" height="13.2" opacity="0.67"/><rect x="177.5" y="6.7" width="0.6" height="11.5" opacity="0.86"/><rect x="178.0" y="6.3" width="0.6" height="10.0" opacity="0.72"/><rect x="178.5" y="5.2" width="0.6" height="11.4" opacity="0.88"/><rect x="179.0" y="5.6" width="0.6" height="12.4" opacity="0.74"/><rect x="179.5" y="5.0" width="0.6" height="10.8" opacity="0.67"/><rect x="180.0" y="4.9" width="0.6" height="7.3" opacity="0.82"/><rect x="180.5" y="6.0" width="0.6" height="6.4" opacity="0.79"/><rect x="181.0" y="5.1" width="0.6" height="7.5" opacity="0.51"/><rect x="181.5" y="5.7" width="0.6" height="9.8" opacity="0.37"/><rect x="182.0" y="5.4" width="0.6" height="6.8" opacity="0.75"/><rect x="182.5" y="5.0" width="0.6" height="10.5" opacity="0.89"/><rect x="183.0" y="5.3" width="0.6" height="10.7" opacity="0.52"/><rect x="183.5" y="4.6" width="0.6" height="9.8" opacity="0.37"/><rect x="184.0" y="4.8" width="0.6" height="8.8" opacity="0.69"/><rect x="184.5" y="4.7" width="0.6" height="7.4" opacity="0.83"/><rect x="185.0" y="5.0" width="0.6" height="10.9" opacity="0.84"/></g>
<path d="M233 2.5 H195 Q191.5 2.5 191.5 6 V20 Q191.5 23.5 195 23.5" fill="none" stroke="#343532" stroke-width="1.3"/>
<path d="M245 5h11v2h-11z M245 5h2v17h-2z M254 5h2v19h-2z M241 21h5v2h-5z M242 20h1v4h-1z M256 20h6v2h-6z M247 3h1v6h-1z M249 3h1v6h-1z M251 3h1v6h-1z M253 3h1v5h-1z M243 17h1v7h-1z M257 18h1v6h-1z M259 18h1v6h-1z M261 18h1v5h-1z" fill="#474946" stroke="#474946" stroke-width="1.4" stroke-linejoin="round"/>
<path shape-rendering="crispEdges" d="M245 5h11v2h-11z M245 5h2v17h-2z M254 5h2v19h-2z M241 21h5v2h-5z M242 20h1v4h-1z M256 20h6v2h-6z M247 3h1v6h-1z M249 3h1v6h-1z M251 3h1v6h-1z M253 3h1v5h-1z M243 17h1v7h-1z M257 18h1v6h-1z M259 18h1v6h-1z M261 18h1v5h-1z" fill="#ccffff"/>
<text x="275.2" y="21.5" font-size="24" font-weight="bold" fill="#00ff00" text-anchor="middle">T</text>
<path fill="#40443e" fill-rule="evenodd" d="M290 14 L292 12 H306.5 V16 H303 V18.5 H301 V16 H299.3 V19.5 H297 V16 H295 V18.5 H293 V16 H292 Z M308 9 H311 Q313.2 10.5 313.2 12.5 V17.5 Q313.2 19.5 311 20.8 H308 Q305.8 19.5 305.8 17.5 V12.5 Q305.8 10.5 308 9 Z M308.2 12 H310.2 V17 H308.2 Z"/>
<g fill="none">
<path d="M316 3.5 H335.3 V22.6 H319.5 L316 19 Z" stroke="#5a50d0" stroke-width="2.1"/>
<path d="M316 3.5 H335.3 V22.6 H319.5 L316 19 Z" stroke="#c8f4f4" stroke-width="1.35"/>
<path d="M320 4 V12 H332 V4" stroke="#4038c0" stroke-width="2.1"/>
<path d="M320 4 V12 H332 V4" stroke="#d4e8fa" stroke-width="1.35"/>
<path d="M321 22.5 V15.5 H331.2 V22.5" stroke="#5a50d0" stroke-width="2.1"/>
<path d="M321 22.5 V15.5 H331.2 V22.5" stroke="#d4e8fa" stroke-width="1.35"/>
</g>
<rect x="325.2" y="16" width="5.4" height="6.4" fill="#ccffff"/>
<rect x="322.8" y="16.6" width="1.6" height="4.6" fill="#2a1cb0"/>
<g fill="#424440"><rect x="346" y="3" width="12.5" height="10.5"/><rect x="341" y="12.5" width="21.5" height="11" rx="2.5"/></g>
<g fill="#5a5c58"><rect x="348.5" y="5.6" width="7.5" height="1.5"/><rect x="348.5" y="8.8" width="7.5" height="1.5"/></g>
<rect x="343" y="14.6" width="17.5" height="7" rx="1" fill="#535552"/>
<rect x="344.5" y="16.6" width="14.5" height="3.4" fill="#424440"/><rect x="345.6" y="17.6" width="12.3" height="1.4" fill="#5a5c58"/>
<rect x="366" y="1" width="1.4" height="26" fill="#181818"/>
<rect x="393.5" y="3.5" width="113" height="21" fill="#000" stroke="#605e98" stroke-width="1.3"/>
<g shape-rendering="crispEdges"><path fill="#052a30" d="M399 12h2v5h-2zM403 12h2v5h-2zM407 12h2v5h-2zM411 12h2v5h-2zM415 12h2v5h-2zM419 12h2v5h-2zM423 12h2v5h-2zM427 12h2v5h-2zM431 12h2v5h-2zM435 12h2v5h-2zM439 12h2v5h-2zM443 12h2v5h-2zM447 12h2v5h-2zM451 12h2v5h-2zM455 12h2v5h-2zM459 12h2v5h-2zM463 12h2v5h-2zM467 12h2v5h-2zM471 12h2v5h-2zM475 12h2v5h-2zM479 12h2v5h-2zM483 12h2v5h-2zM487 12h2v5h-2zM491 12h2v5h-2zM495 12h2v5h-2zM499 12h2v5h-2zM503 12h2v5h-2z"/><path fill="#07373f" d="M396 10h3v9h-3zM400 10h3v9h-3zM404 10h3v9h-3zM408 10h3v9h-3zM412 10h3v9h-3zM416 10h3v9h-3zM420 10h3v9h-3zM424 10h3v9h-3zM428 10h3v9h-3zM432 10h3v9h-3zM436 10h3v9h-3zM440 10h3v9h-3zM444 10h3v9h-3zM448 10h3v9h-3zM452 10h3v9h-3zM456 10h3v9h-3zM460 10h3v9h-3zM464 10h3v9h-3zM468 10h3v9h-3zM472 10h3v9h-3zM476 10h3v9h-3zM480 10h3v9h-3zM484 10h3v9h-3zM488 10h3v9h-3zM492 10h3v9h-3zM496 10h3v9h-3zM500 10h3v9h-3z"/><path fill="#0a4650" d="M397 7h1v15h-1zM401 7h1v15h-1zM405 7h1v15h-1zM409 7h1v15h-1zM413 7h1v15h-1zM417 7h1v15h-1zM421 7h1v15h-1zM425 7h1v15h-1zM429 7h1v15h-1zM433 7h1v15h-1zM437 7h1v15h-1zM441 7h1v15h-1zM445 7h1v15h-1zM449 7h1v15h-1zM453 7h1v15h-1zM457 7h1v15h-1zM461 7h1v15h-1zM465 7h1v15h-1zM469 7h1v15h-1zM473 7h1v15h-1zM477 7h1v15h-1zM481 7h1v15h-1zM485 7h1v15h-1zM489 7h1v15h-1zM493 7h1v15h-1zM497 7h1v15h-1zM501 7h1v15h-1z"/></g>
<rect x="441.5" y="4" width="16" height="19.5" fill="#000" stroke="#ff6a00" stroke-width="2"/>
<path d="M443.5 13 L445 20 L448.2 6.5 L452 20.5 L455 7" fill="none" stroke="#00f0ff" stroke-width="2.4" stroke-linejoin="round"/>
<rect x="521.5" y="3.5" width="21.5" height="21" fill="#000" stroke="#a0a0a0" stroke-width="1"/>
<text x="532.3" y="20.3" font-size="18" font-weight="bold" fill="#ccffff" text-anchor="middle">W</text>
<rect x="547.5" y="3" width="98.5" height="21.7" rx="10" fill="#000"/>
<text x="596.8" y="20.3" font-size="17.3" fill="#fff" stroke="#000" stroke-width="0.2" text-anchor="middle" textLength="48" lengthAdjust="spacingAndGlyphs">200ns</text>
<text x="14.8" y="469.6" font-size="16" fill="#ffff00" stroke="#535552" stroke-width="0.2" textLength="31" lengthAdjust="spacingAndGlyphs">CH1</text>
<rect x="48" y="453" width="62" height="22" rx="11" fill="#000"/>
<text x="79.6" y="471.8" font-size="15.6" fill="#ffff00" stroke="#000" stroke-width="0.2" text-anchor="middle" textLength="41.5" lengthAdjust="spacingAndGlyphs">1.00V</text>
<text x="114.8" y="469.6" font-size="16" fill="#00ffff" stroke="#535552" stroke-width="0.2" textLength="31" lengthAdjust="spacingAndGlyphs">CH2</text>
<rect x="148" y="453" width="62" height="22" rx="11" fill="#000"/>
<text x="179.6" y="471.8" font-size="15.6" fill="#00ffff" stroke="#000" stroke-width="0.2" text-anchor="middle" textLength="41.5" lengthAdjust="spacingAndGlyphs">1.00V</text>
<text x="214.8" y="469.6" font-size="16" fill="#ff2000" stroke="#535552" stroke-width="0.2" textLength="31" lengthAdjust="spacingAndGlyphs">CH3</text>
<rect x="248" y="453" width="62" height="22" rx="11" fill="#000"/>
<text x="279.6" y="471.8" font-size="15.6" fill="#ff2000" stroke="#000" stroke-width="0.2" text-anchor="middle" textLength="41.5" lengthAdjust="spacingAndGlyphs">1.00V</text>
<text x="314.8" y="469.6" font-size="16" fill="#00ff00" stroke="#535552" stroke-width="0.2" textLength="31" lengthAdjust="spacingAndGlyphs">CH4</text>
<rect x="348" y="453" width="62" height="22" rx="11" fill="#000"/>
<text x="379.6" y="471.8" font-size="15.6" fill="#00ff00" stroke="#000" stroke-width="0.2" text-anchor="middle" textLength="41.5" lengthAdjust="spacingAndGlyphs">1.00V</text>
<text x="417.3" y="469.6" font-size="16" fill="#ffff00" stroke="#535552" stroke-width="0.2" textLength="31" lengthAdjust="spacingAndGlyphs">CH1</text>
<path d="M453.5 472 H459 L465 457.2 H470.5" fill="none" stroke="#78b4ff" stroke-width="1.8"/>
<path d="M453.5 471.3 H458.6 L464.6 456.6 H470.5" fill="none" stroke="#e8f4ff" stroke-width="0.7"/>
<rect x="473" y="453" width="70" height="22" rx="11" fill="#000"/>
<text x="508" y="469.7" font-size="15.6" fill="#ffff00" stroke="#000" stroke-width="0.2" text-anchor="middle" textLength="43" lengthAdjust="spacingAndGlyphs">2.04V</text>
<rect x="550" y="453" width="100" height="22" rx="11" fill="#000"/>
<text x="599.6" y="469.7" font-size="15.6" fill="#ffff00" stroke="#000" stroke-width="0.2" text-anchor="middle" textLength="86" lengthAdjust="spacingAndGlyphs">50.0000KHz</text>
<rect x="656" y="0" width="144" height="480" fill="#767676"/>
<rect x="657" y="1" width="143" height="27" fill="#404540"/>
<rect x="657" y="0" width="143" height="1" fill="#bcb4bc"/>
<rect x="656" y="0" width="1" height="480" fill="#bcb4bc"/>
<text x="716.7" y="20.3" font-size="21" fill="#fff" stroke="#404540" stroke-width="0.2" text-anchor="middle" textLength="76" lengthAdjust="spacingAndGlyphs">UTILITY</text>
<rect x="777" y="3" width="21" height="21" fill="#ff3300"/>
<text x="787.6" y="19.8" font-size="21" font-weight="bold" fill="#fff" text-anchor="middle">X</text>
<rect x="673.5" y="64.5" width="109" height="41" rx="4" fill="none" stroke="#3c3a3c" stroke-width="1"/>
<path d="M673.5 101.5 V68.5 Q673.5 64.5 677.5 64.5 H778.5" fill="none" stroke="#d6ccd6" stroke-width="1"/>
<text x="727.7" y="84.2" font-size="17.6" fill="#fff" stroke="#767676" stroke-width="0.25" text-anchor="middle" textLength="58" lengthAdjust="spacingAndGlyphs">System</text>
<text x="727.3" y="102.2" font-size="17.6" fill="#fff" stroke="#767676" stroke-width="0.25" text-anchor="middle" textLength="54" lengthAdjust="spacingAndGlyphs">Status</text>
<rect x="673.5" y="145.5" width="109" height="41" rx="4" fill="none" stroke="#3c3a3c" stroke-width="1"/>
<path d="M673.5 182.5 V149.5 Q673.5 145.5 677.5 145.5 H778.5" fill="none" stroke="#d6ccd6" stroke-width="1"/>
<text x="728.3" y="164.6" font-size="17.6" fill="#fff" stroke="#767676" stroke-width="0.25" text-anchor="middle" textLength="57" lengthAdjust="spacingAndGlyphs">Update</text>
<text x="727.7" y="182.8" font-size="17.6" fill="#fff" stroke="#767676" stroke-width="0.25" text-anchor="middle" textLength="72" lengthAdjust="spacingAndGlyphs">Firmware</text>
<rect x="673.5" y="221.5" width="109" height="41" rx="4" fill="none" stroke="#3c3a3c" stroke-width="1"/>
<path d="M673.5 258.5 V225.5 Q673.5 221.5 677.5 221.5 H778.5" fill="none" stroke="#d6ccd6" stroke-width="1"/>
<text x="727.8" y="240.8" font-size="17.6" fill="#fff" stroke="#767676" stroke-width="0.25" text-anchor="middle" textLength="39" lengthAdjust="spacingAndGlyphs">Save</text>
<text x="727.8" y="258.8" font-size="17.6" fill="#fff" stroke="#767676" stroke-width="0.25" text-anchor="middle" textLength="77.5" lengthAdjust="spacingAndGlyphs">Waveform</text>
<rect x="673.5" y="305.5" width="109" height="41" rx="4" fill="none" stroke="#3c3a3c" stroke-width="1"/>
<path d="M673.5 342.5 V309.5 Q673.5 305.5 677.5 305.5 H778.5" fill="none" stroke="#d6ccd6" stroke-width="1"/>
<text x="727" y="333.2" font-size="17.6" fill="#fff" stroke="#767676" stroke-width="0.25" text-anchor="middle" textLength="91.5" lengthAdjust="spacingAndGlyphs">Do Self Cal</text>
<rect x="678.5" y="448.5" width="99" height="24" rx="4" fill="none" stroke="#3c3a3c" stroke-width="1"/>
<path d="M678.5 468.5 V452.5 Q678.5 448.5 682.5 448.5 H773.5" fill="none" stroke="#d6ccd6" stroke-width="1"/>
<text x="727.7" y="467" font-size="17.6" fill="#fff" stroke="#767676" stroke-width="0.25" text-anchor="middle" textLength="72" lengthAdjust="spacingAndGlyphs">Page 1/4</text>
</svg>
</body></html>
